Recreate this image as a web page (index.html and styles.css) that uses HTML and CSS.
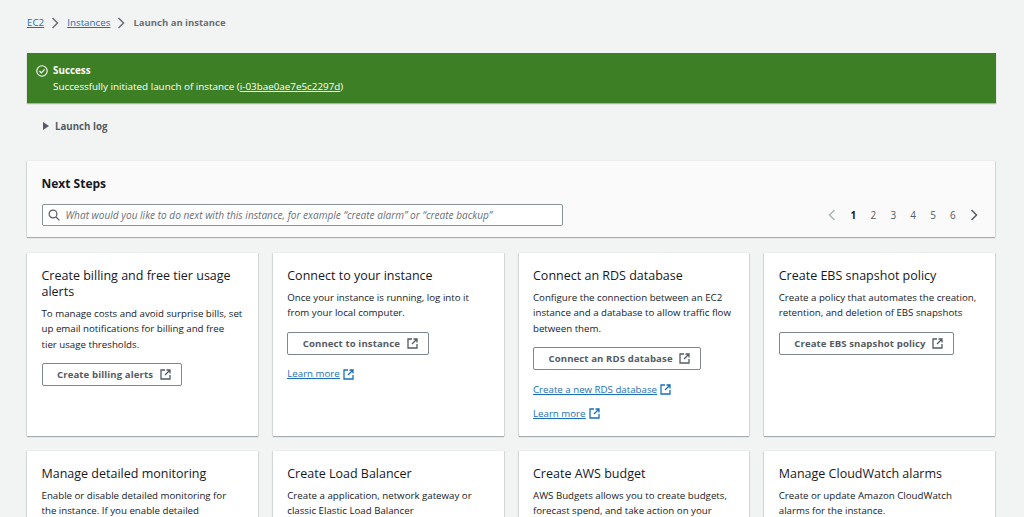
FILE: index.html
```html
<!DOCTYPE html>
<html lang="en">
<head>
<meta charset="utf-8">
<title>Launch an instance</title>
<link rel="stylesheet" href="styles.css">
</head>
<body>
<svg class="defs" width="0" height="0" aria-hidden="true"><defs>
<symbol id="ext" viewBox="0 0 11 11"><path d="M5 1H1v9h9V6M6.5 1H10v3.5M10 1L5 6" fill="none" stroke="currentColor" stroke-width="1.3"/></symbol>
<symbol id="chev" viewBox="0 0 8 12"><path d="M1.5 1l5 5-5 5" fill="none" stroke="currentColor" stroke-width="1.5"/></symbol>
<symbol id="chevl" viewBox="0 0 8 12"><path d="M6.5 1l-5 5 5 5" fill="none" stroke="currentColor" stroke-width="1.5"/></symbol>
</defs></svg>
<div class="page">
  <nav class="crumbs">
    <a href="#">EC2</a>
    <svg class="crumb-sep"><use href="#chev"/></svg>
    <a href="#">Instances</a>
    <svg class="crumb-sep"><use href="#chev"/></svg>
    <span class="crumb-current">Launch an instance</span>
  </nav>

  <div class="flash">
    <svg class="flash-icon" viewBox="0 0 12 12"><circle cx="6" cy="6" r="5.2" fill="none" stroke="#fff" stroke-width="1.1"/><path d="M3.5 6l1.9 1.9 3.2-3.6" fill="none" stroke="#fff" stroke-width="1.1"/></svg>
    <div>
      <div class="flash-title">Success</div>
      <div class="flash-text">Successfully initiated launch of instance (<a href="#">i-03bae0ae7e5c2297d</a>)</div>
    </div>
  </div>

  <div class="log"><span class="caret"></span>Launch log</div>

  <section class="steps">
    <h2>Next Steps</h2>
    <div class="steps-row">
      <div class="search">
        <svg class="search-icon" viewBox="0 0 12 12"><circle cx="5" cy="5" r="3.9" fill="none" stroke="currentColor" stroke-width="1.2"/><path d="M8 8l3.4 3.4" stroke="currentColor" stroke-width="1.2"/></svg>
        <span>What would you like to do next with this instance, for example “create alarm” or “create backup”</span>
      </div>
      <div class="pager">
        <svg class="pg-arrow off"><use href="#chevl"/></svg>
        <span class="on">1</span><span>2</span><span>3</span><span>4</span><span>5</span><span>6</span>
        <svg class="pg-arrow"><use href="#chev"/></svg>
      </div>
    </div>
  </section>

  <div class="cards">
    <article class="card">
      <h3>Create billing and free tier usage alerts</h3>
      <p>To manage costs and avoid surprise bills, set up email notifications for billing and free<br>tier usage thresholds.</p>
      <a class="btn" href="#">Create billing alerts<svg class="ext"><use href="#ext"/></svg></a>
    </article>
    <article class="card">
      <h3>Connect to your instance</h3>
      <p>Once your instance is running, log into it from your local computer.</p>
      <a class="btn" href="#">Connect to instance<svg class="ext"><use href="#ext"/></svg></a>
      <a class="link" href="#"><u>Learn more</u><svg class="ext"><use href="#ext"/></svg></a>
    </article>
    <article class="card">
      <h3>Connect an RDS database</h3>
      <p>Configure the connection between an EC2 instance and a database to allow traffic flow between them.</p>
      <a class="btn" href="#">Connect an RDS database<svg class="ext"><use href="#ext"/></svg></a>
      <a class="link" href="#"><u>Create a new RDS database</u><svg class="ext"><use href="#ext"/></svg></a>
      <a class="link" href="#"><u>Learn more</u><svg class="ext"><use href="#ext"/></svg></a>
    </article>
    <article class="card">
      <h3>Create EBS snapshot policy</h3>
      <p>Create a policy that automates the creation, retention, and deletion of EBS snapshots</p>
      <a class="btn" href="#">Create EBS snapshot policy<svg class="ext"><use href="#ext"/></svg></a>
    </article>
    <article class="card">
      <h3>Manage detailed monitoring</h3>
      <p>Enable or disable detailed monitoring for the instance. If you enable detailed</p>
    </article>
    <article class="card">
      <h3>Create Load Balancer</h3>
      <p>Create a application, network gateway or classic Elastic Load Balancer</p>
    </article>
    <article class="card">
      <h3>Create AWS budget</h3>
      <p>AWS Budgets allows you to create budgets, forecast spend, and take action on your</p>
    </article>
    <article class="card">
      <h3>Manage CloudWatch alarms</h3>
      <p>Create or update Amazon CloudWatch alarms for the instance.</p>
    </article>
  </div>
</div>
</body>
</html>
```
FILE: styles.css
```css
* { box-sizing: border-box; }
html, body { height: 517px; overflow: hidden; }
body {
  margin: 0;
  background: #f2f3f3;
  color: #16191f;
  font-family: "Open Sans", "Liberation Sans", sans-serif;
  font-size: 10px;
}
.defs { display: block; height: 0; }
.page { padding: 15px 29px 0 27px; }
a { color: #0073bb; }

.crumbs { display: flex; align-items: center; height: 15px; font-size: 9.8px; }
.crumb-sep { width: 8px; height: 12px; margin: 0 8px 0 7px; color: #687078; }
.crumbs a { color: #1a6fb5; }
.crumb-current { color: #687078; font-weight: 700; font-size: 9.5px; }

.flash {
  display: flex;
  align-items: center;
  gap: 5px;
  height: 50px;
  margin-top: 23px;
  margin-right: -.5px;
  padding: 0 9px;
  background: #3d7f24;
  color: #fff;
  box-shadow: 0 1px 1px rgba(0, 28, 36, .3);
  line-height: 16px;
  font-size: 9.85px;
}
.flash-icon { width: 12px; height: 12px; flex: none; margin-top: -15px; }
.flash-title { font-weight: 700; }
.flash-text a { color: #fff; }

.log { display: flex; align-items: center; height: 14px; margin: 16px 0 0 16px; color: #545b64; font-weight: 700; font-size: 9.7px; }
.caret { width: 0; height: 0; margin-right: 6px; border-left: 6px solid #545b64; border-top: 4px solid transparent; border-bottom: 4px solid transparent; }

.steps {
  height: 76px;
  margin-top: 28px;
  padding: 14px 14.5px 0;
  background: #fafafa;
  box-shadow: 0 1px 1px rgba(0, 28, 36, .3), 1px 0 1px rgba(0, 28, 36, .08), -1px 0 1px rgba(0, 28, 36, .08);
}
.steps h2 { margin: 0; font-size: 12px; line-height: 17px; font-weight: 700; }
.steps-row { display: flex; justify-content: space-between; align-items: center; margin-top: 12px; }
.search {
  display: flex;
  align-items: center;
  width: 521px;
  height: 22px;
  padding: 0 5px;
  gap: 6px;
  background: #fff;
  border: 1px solid #879596;
  border-radius: 2px;
  color: #687078;
  font-style: italic;
  font-size: 10.1px;
}
.search-icon { width: 12px; height: 12px; color: #545b64; flex: none; }
.pager { display: flex; align-items: center; gap: 14.2px; margin-right: 2.5px; color: #545b64; font-size: 10px; }
.pager .on { color: #16191f; font-weight: 700; }
.pg-arrow { width: 8px; height: 12px; color: #545b64; }
.pg-arrow.off { color: #aab7b8; }

.cards {
  display: grid;
  grid-template-columns: repeat(4, 1fr);
  grid-auto-rows: 183px;
  gap: 15px;
  margin-top: 16px;
}
.card {
  padding: 15px 14.5px;
  background: #fff;
  box-shadow: 0 1px 1px rgba(0, 28, 36, .3), 1px 0 1px rgba(0, 28, 36, .08), -1px 0 1px rgba(0, 28, 36, .08);
}
.card h3 { margin: 0; font-size: 12.5px; line-height: 16px; font-weight: 400; }
.card p { margin: 5.5px 0 0; line-height: 15.6px; font-size: 9.7px; }
.btn {
  display: flex;
  align-items: center;
  width: fit-content;
  height: 23px;
  margin-top: 11px;
  padding: 0 10px 0 14.5px;
  border: 1px solid #7d878f;
  border-radius: 2px;
  color: #545b64;
  font-weight: 700;
  font-size: 9.6px;
  letter-spacing: .1px;
  text-decoration: none;
}
.ext { width: 11px; height: 11px; margin-left: 3px; flex: none; }
.btn .ext { margin-left: 6.5px; }
.link { display: flex; align-items: center; width: fit-content; margin-top: 10px; line-height: 14px; color: #1a6fb5; font-size: 9.7px; }
.btn + .link { margin-top: 12.5px; }
```
